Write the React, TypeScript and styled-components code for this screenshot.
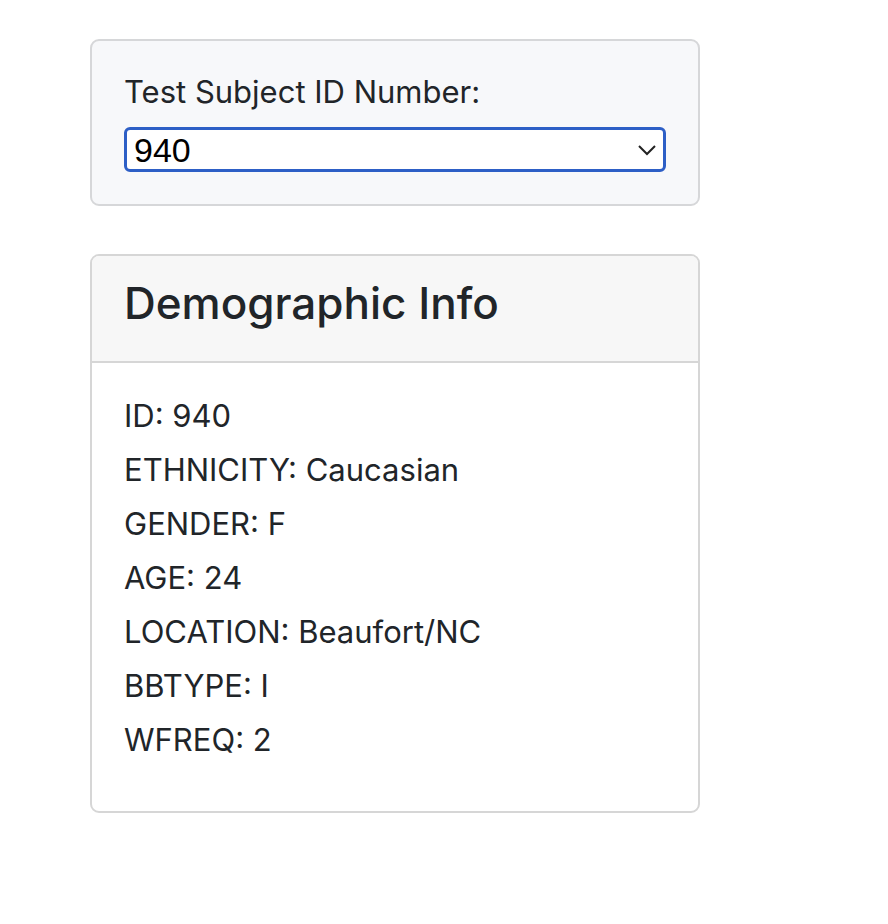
import React from "react";
import styled, { createGlobalStyle } from "styled-components";

const Global = createGlobalStyle`
  html, body { margin: 0; padding: 0; background: #ffffff; }
  body { font-family: Inter, "Liberation Sans", Arial, sans-serif; color: #212529; }
`;

const Page = styled.div`
  padding: 39px 0 0 90px;
  width: 610px;
  display: flex;
  flex-direction: column;
  gap: 48px;
`;

const Well = styled.div`
  background: #f7f8fa;
  border: 2px solid #d6d7d9;
  border-radius: 9px;
  padding: 33px 32px 32px 32px;
  display: flex;
  flex-direction: column;
  gap: 17px;
`;

const Label = styled.label`
  font-size: 31px;
  line-height: 36px;
  font-weight: 400;
  color: #212529;
`;

const SelectWrap = styled.div`
  position: relative;
  height: 45px;
  box-sizing: border-box;
  border: 3px solid #2d5fc6;
  border-radius: 6px;
  background: #ffffff;
  display: flex;
  align-items: center;
`;

const Select = styled.select`
  appearance: none;
  border: none;
  outline: none;
  background: transparent;
  width: 100%;
  height: 100%;
  padding: 0 0 0 7px;
  font-family: "Liberation Sans", Arial, sans-serif;
  font-size: 34px;
  color: #000000;
`;

const Chevron = styled.svg`
  position: absolute;
  right: 6px;
  top: 50%;
  transform: translateY(-50%);
  pointer-events: none;
`;

const Card = styled.div`
  border: 2px solid #d6d6d6;
  border-radius: 9px;
  overflow: hidden;
  background: #ffffff;
`;

const CardHeader = styled.div`
  background: #f7f7f7;
  border-bottom: 2px solid #d6d6d6;
  padding: 18px 32px 0 32px;
  height: 107px;
  box-sizing: border-box;
`;

const Title = styled.h2`
  margin: 0;
  font-size: 44px;
  line-height: 58px;
  font-weight: 500;
  color: #212529;
`;

const CardBody = styled.div`
  padding: 26px 32px 44px 32px;
  display: flex;
  flex-direction: column;
`;

const Line = styled.div`
  font-size: 31px;
  line-height: 54px;
  color: #212529;
`;

const info: [string, string | number][] = [
  ["ID", 940],
  ["ETHNICITY", "Caucasian"],
  ["GENDER", "F"],
  ["AGE", 24],
  ["LOCATION", "Beaufort/NC"],
  ["BBTYPE", "I"],
  ["WFREQ", 2],
];

export default function App() {
  return (
    <>
      <Global />
      <Page>
        <Well>
          <Label htmlFor="sel">Test Subject ID Number:</Label>
          <SelectWrap>
            <Select id="sel" defaultValue="940">
              <option value="940">940</option>
            </Select>
            <Chevron width="20" height="12" viewBox="0 0 20 12">
              <path d="M2 2 L10 10 L18 2" fill="none" stroke="#222" strokeWidth="2" />
            </Chevron>
          </SelectWrap>
        </Well>
        <Card>
          <CardHeader>
            <Title>Demographic Info</Title>
          </CardHeader>
          <CardBody>
            {info.map(([k, v]) => (
              <Line key={k}>
                {k}: {v}
              </Line>
            ))}
          </CardBody>
        </Card>
      </Page>
    </>
  );
}
